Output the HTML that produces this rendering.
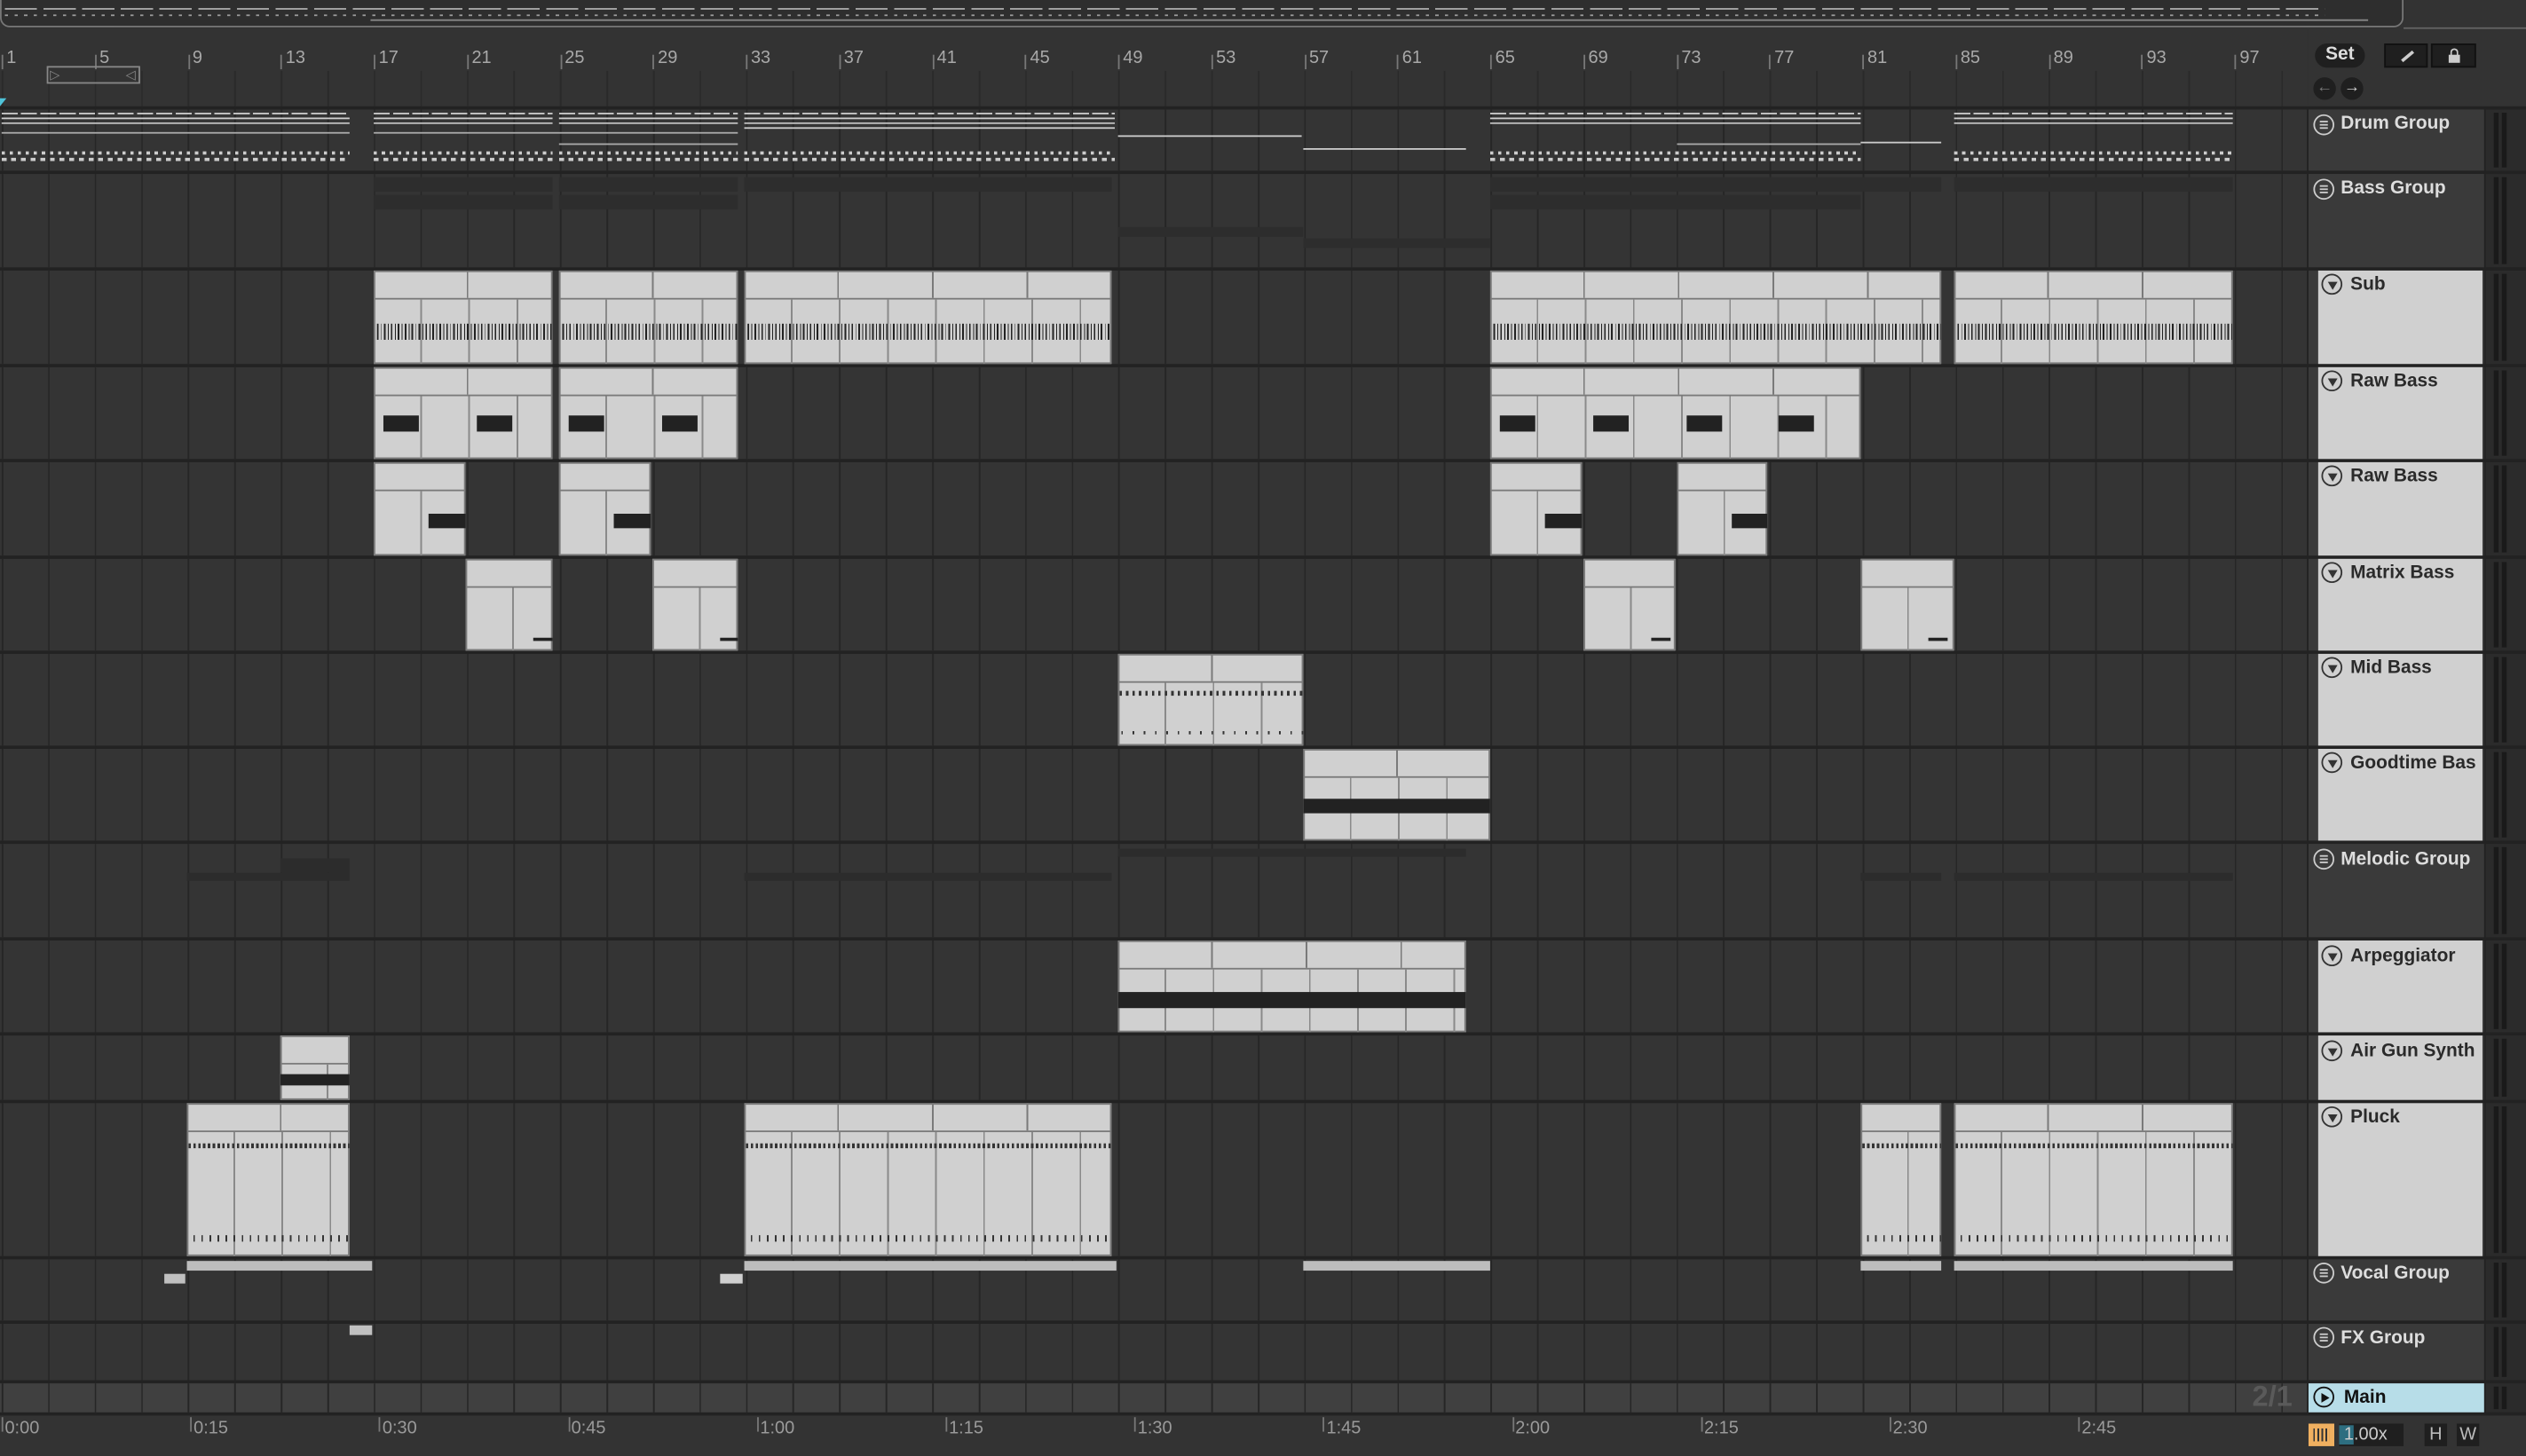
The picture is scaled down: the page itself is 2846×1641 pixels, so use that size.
<!DOCTYPE html>
<html><head><meta charset="utf-8">
<style>
html,body{margin:0;padding:0;background:#333;overflow:hidden;width:2846px;height:1640px}
#s{position:absolute;left:0;top:0;width:1568px;height:904px;transform:scale(1.81505);transform-origin:0 0;background:#333;font-family:"Liberation Sans",sans-serif;overflow:hidden}
.a{position:absolute}
.row{position:absolute;left:0;width:1432px;background-color:#343434;background-image:repeating-linear-gradient(90deg,#262626 0 1px,transparent 1px 28.88px);background-position:1px 0}
.clip{position:absolute;background:#d0d0d0;box-shadow:inset 0 0 0 1px #7a7a7a;overflow:hidden}
.hd{position:absolute;left:0;right:0;top:0;border-bottom:1px solid #7a7a7a;background-image:repeating-linear-gradient(90deg,transparent 0 57.76px,#7a7a7a 57.76px 58.76px)}
.bd{position:absolute;left:0;right:0;bottom:0;background-image:repeating-linear-gradient(90deg,transparent 0 28.88px,#8a8a8a 28.88px 29.88px)}
.rn{position:absolute;top:30px;font-size:11px;color:#a8a8a8;font-family:"Liberation Sans Narrow","Liberation Sans",sans-serif}
.rt{position:absolute;top:34px;width:1px;height:9px;background:#777}
.th{position:absolute;left:1433px;width:109px;background:#3a3a3a}
.ti{position:absolute;left:1439px;width:102px;background:#d0d0d0}
.lb{position:absolute;font-size:11.5px;font-weight:bold;white-space:nowrap}
.ic{position:absolute;width:13px;height:13px;border-radius:50%;box-sizing:border-box}
.g{border:1px solid #ccc}
.g::before{content:"";position:absolute;left:3px;top:3px;width:5px;height:5px;border-top:1px solid #ccc;border-bottom:1px solid #ccc;box-sizing:border-box}
.g::after{content:"";position:absolute;left:3px;top:5px;width:5px;height:1px;background:#ccc}
.t{border:1px solid #333}
.t::before{content:"";position:absolute;left:2.5px;top:4px;border-left:3.5px solid transparent;border-right:3.5px solid transparent;border-top:5px solid #333}
.mt{position:absolute;left:1543px;width:25px;background:#2b2b2b}
.mt i{position:absolute;top:2px;bottom:2px;width:3px;background:#1a1a1a}
.tl{position:absolute;top:881px;font-size:11px;color:#9a9a9a}
.tk{position:absolute;top:880px;width:1px;height:9px;background:#777}
</style></head><body><div id="s">
<div class="a" style="left:0;top:0;width:1492px;height:17px;background:#2e2e2e;border:1px solid #777;border-top:none;border-radius:0 0 6px 6px;box-sizing:border-box"></div>
<div class="a" style="left:1492px;top:0;width:76px;height:17px;background:#333;border-bottom:1px solid #666"></div>
<div class="a" style="left:3px;top:5px;width:1440px;height:1px;background:repeating-linear-gradient(90deg,#aaa 0 20px,transparent 20px 24px)"></div>
<div class="a" style="left:3px;top:9px;width:1440px;height:1px;background:repeating-linear-gradient(90deg,#999 0 2px,transparent 2px 6px)"></div>
<div class="a" style="left:230px;top:12px;width:1240px;height:1px;background:#888"></div>
<div class="a" style="left:0;top:18px;width:1432px;height:50px;background:#333"></div>
<div class="a" style="left:0;top:44px;width:1432px;height:24px;background-image:repeating-linear-gradient(90deg,#2a2a2a 0 1px,transparent 1px 28.88px);background-position:1px 0"></div>
<div id="ruler"></div>
<div class="a" style="left:29px;top:41px;width:58px;height:11px;border:1px solid #888;box-sizing:border-box"></div>
<div class="a" style="left:31px;top:43px;color:#888;font-size:8px;line-height:7px">▷</div>
<div class="a" style="left:78px;top:43px;color:#888;font-size:8px;line-height:7px">◁</div>
<div class="a" style="left:0;top:61px;width:0;height:0;border-left:4px solid #4fc3d9;border-bottom:5px solid transparent"></div>
<div class="a" style="left:1433px;top:18px;width:135px;height:50px;background:#333"></div>
<div class="a" style="left:1437px;top:27px;width:31px;height:15px;border-radius:8px;background:#1f1f1f;color:#ddd;font-size:11.5px;font-weight:bold;text-align:center;line-height:15px">Set</div>
<div class="a" style="left:1480px;top:27px;width:27px;height:15px;background:#1f1f1f;border:1px solid #111;box-sizing:border-box"><div class="a" style="left:9px;top:6px;width:9px;height:2px;background:#ccc;transform:rotate(-40deg)"></div></div>
<div class="a" style="left:1509px;top:27px;width:28px;height:15px;background:#1f1f1f;border:1px solid #111;box-sizing:border-box"><div class="a" style="left:10px;top:6px;width:7px;height:5px;background:#ccc"></div><div class="a" style="left:11px;top:2px;width:3px;height:4px;border:1px solid #ccc;border-bottom:none;border-radius:3px 3px 0 0"></div></div>
<div class="a" style="left:1436px;top:48px;width:14px;height:14px;border-radius:50%;background:#1f1f1f;color:#777;font-size:10px;text-align:center;line-height:14px">←</div>
<div class="a" style="left:1453px;top:48px;width:14px;height:14px;border-radius:50%;background:#1f1f1f;color:#ccc;font-size:10px;text-align:center;line-height:14px">→</div>
<div class="a" style="left:0;top:66px;width:1568px;height:814px;background:#222"></div>
<div id="rows"></div>
<div id="clips"></div>
<div class="th" style="top:68px;height:38px"></div><div class="ic g" style="left:1436px;top:71px"></div><div class="lb" style="left:1453px;top:71px;color:#ddd">Drum Group</div>
<div class="th" style="top:108px;height:58px"></div><div class="ic g" style="left:1436px;top:111px"></div><div class="lb" style="left:1453px;top:111px;color:#ddd">Bass Group</div>
<div class="th" style="top:168px;height:58px"></div><div class="ti" style="top:168px;height:58px"></div><div class="ic t" style="left:1441px;top:170px"></div><div class="lb" style="left:1459px;top:171px;color:#2a2a2a">Sub</div>
<div class="th" style="top:228px;height:57px"></div><div class="ti" style="top:228px;height:57px"></div><div class="ic t" style="left:1441px;top:230px"></div><div class="lb" style="left:1459px;top:231px;color:#2a2a2a">Raw Bass</div>
<div class="th" style="top:287px;height:58px"></div><div class="ti" style="top:287px;height:58px"></div><div class="ic t" style="left:1441px;top:289px"></div><div class="lb" style="left:1459px;top:290px;color:#2a2a2a">Raw Bass</div>
<div class="th" style="top:347px;height:57px"></div><div class="ti" style="top:347px;height:57px"></div><div class="ic t" style="left:1441px;top:349px"></div><div class="lb" style="left:1459px;top:350px;color:#2a2a2a">Matrix Bass</div>
<div class="th" style="top:406px;height:57px"></div><div class="ti" style="top:406px;height:57px"></div><div class="ic t" style="left:1441px;top:408px"></div><div class="lb" style="left:1459px;top:409px;color:#2a2a2a">Mid Bass</div>
<div class="th" style="top:465px;height:57px"></div><div class="ti" style="top:465px;height:57px"></div><div class="ic t" style="left:1441px;top:467px"></div><div class="lb" style="left:1459px;top:468px;color:#2a2a2a">Goodtime Bas</div>
<div class="th" style="top:524px;height:58px"></div><div class="ic g" style="left:1436px;top:527px"></div><div class="lb" style="left:1453px;top:528px;color:#ddd">Melodic Group</div>
<div class="th" style="top:584px;height:57px"></div><div class="ti" style="top:584px;height:57px"></div><div class="ic t" style="left:1441px;top:587px"></div><div class="lb" style="left:1459px;top:588px;color:#2a2a2a">Arpeggiator</div>
<div class="th" style="top:643px;height:40px"></div><div class="ti" style="top:643px;height:40px"></div><div class="ic t" style="left:1441px;top:646px"></div><div class="lb" style="left:1459px;top:647px;color:#2a2a2a">Air Gun Synth</div>
<div class="th" style="top:685px;height:95px"></div><div class="ti" style="top:685px;height:95px"></div><div class="ic t" style="left:1441px;top:687px"></div><div class="lb" style="left:1459px;top:688px;color:#2a2a2a">Pluck</div>
<div class="th" style="top:782px;height:38px"></div><div class="ic g" style="left:1436px;top:784px"></div><div class="lb" style="left:1453px;top:785px;color:#ddd">Vocal Group</div>
<div class="th" style="top:822px;height:35px"></div><div class="ic g" style="left:1436px;top:824px"></div><div class="lb" style="left:1453px;top:825px;color:#ddd">FX Group</div>
<div class="th" style="top:859px;height:18px;background:#b7dde8"></div><div class="ic" style="left:1436px;top:861px;border:1px solid #111"><div class="a" style="left:3.5px;top:2.5px;border-top:3.5px solid transparent;border-bottom:3.5px solid transparent;border-left:5px solid #111"></div></div><div class="lb" style="left:1455px;top:862px;color:#111">Main</div>
<div class="a" style="left:1398px;top:857px;font-size:18px;font-weight:bold;color:#5a5a5a">2/1</div>
<div id="meters"></div>
<div class="a" style="left:0;top:879px;width:1568px;height:25px;background:#333"></div>
<div id="tline"></div>
<div class="a" style="left:1433px;top:884px;width:16px;height:14px;background:#f0b060"><div class="a" style="left:3px;top:3px;width:10px;height:8px;background:repeating-linear-gradient(90deg,#333 0 1px,transparent 1px 2.5px)"></div></div>
<div class="a" style="left:1452px;top:884px;width:40px;height:14px;background:#1f1f1f;color:#ccc;font-size:11px;line-height:14px"><span style="background:#2d6e80;padding:0 0 0 3px">1</span>.00x</div>
<div class="a" style="left:1505px;top:884px;width:14px;height:14px;background:#1f1f1f;color:#bbb;font-size:11px;text-align:center;line-height:14px">H</div>
<div class="a" style="left:1525px;top:884px;width:14px;height:14px;background:#1f1f1f;color:#bbb;font-size:11px;text-align:center;line-height:14px">W</div>
<script>
function bx(b){return 1+(b-1)*14.44}
var h='';
var nums=[1,5,9,13,17,21,25,29,33,37,41,45,49,53,57,61,65,69,73,77,81,85,89,93,97];
nums.forEach(function(n){var x=bx(n);h+='<div class="rt" style="left:'+x+'px"></div><div class="rn" style="left:'+(x+3)+'px">'+n+'</div>';});
document.getElementById('ruler').innerHTML=h;
var rows=[[68,106],[108,166],[168,226],[228,285],[287,345],[347,404],[406,463],[465,522],[524,582],[584,641],[643,683],[685,780],[782,820],[822,857],[859,877]];
h='';var m='';
rows.forEach(function(r,i){h+='<div class="row" style="top:'+r[0]+'px;height:'+(r[1]-r[0])+'px'+(i==14?';background-color:#404040':'')+'"></div>';
m+='<div class="mt" style="top:'+r[0]+'px;height:'+(r[1]-r[0])+'px"><i style="left:5px"></i><i style="left:10px"></i></div>';});
document.getElementById('rows').innerHTML=h;document.getElementById('meters').innerHTML=m;
var tl=['0:00','0:15','0:30','0:45','1:00','1:15','1:30','1:45','2:00','2:15','2:30','2:45'];h='';
tl.forEach(function(t,i){var x=1+i*117.2;h+='<div class="tk" style="left:'+x+'px"></div><div class="tl" style="left:'+(x+2)+'px">'+t+'</div>';});
document.getElementById('tline').innerHTML=h;
h='';
function clip(x1,x2,y1,y2,hh,inner){h+='<div class="clip" style="left:'+x1+'px;top:'+y1+'px;width:'+(x2-x1)+'px;height:'+(y2-y1)+'px"><div class="hd" style="height:'+hh+'px"></div><div class="bd" style="top:'+(hh+1)+'px"></div>'+(inner||'')+'</div>';}
function bar(y,hgt,x,w,c){return '<div class="a" style="left:'+x+'px;top:'+y+'px;width:'+w+'px;height:'+hgt+'px;background:'+c+'"></div>';}
var tick='<div class="a" style="left:2px;right:0;top:33px;height:10px;background:repeating-linear-gradient(90deg,#222 0 1px,transparent 1px 2.5px,#222 2.5px 3px,transparent 3px 4.3px)"></div>';
[[232,343],[347,458],[462,690],[925,1205],[1213,1386]].forEach(function(c){clip(c[0],c[1],168,226,17,tick)});
function rb(x1,x2){var s='';for(var x=x1;x<x2-20;x+=57.76){s+=bar(30,10,x-x1+6,22,'#222');}return s;}
[[232,343],[347,458],[925,1155]].forEach(function(c){clip(c[0],c[1],228,285,17,rb(c[0],c[1]))});
[[232,289],[347,404],[925,982],[1041,1097]].forEach(function(c){clip(c[0],c[1],287,345,17,bar(32,9,34,23,'#222'))});
[[289,343],[405,458],[983,1040],[1155,1213]].forEach(function(c){clip(c[0],c[1],347,404,17,bar(49,2,42,12,'#222'))});
var dots='<div class="a" style="left:1px;right:0;top:23px;height:3px;background:repeating-linear-gradient(90deg,#333 0 1.5px,transparent 1.5px 4px)"></div><div class="a" style="left:2px;right:0;top:48px;height:2px;background:repeating-linear-gradient(90deg,#333 0 1px,transparent 1px 7px)"></div>';
clip(694,809,406,463,17,dots);
clip(809,925,465,522,17,bar(31,9,0,120,'#222'));
clip(694,910,584,641,17,bar(32,10,0,220,'#222'));
clip(174,217,643,683,17,bar(24,7,0,50,'#222'));
var pl='<div class="a" style="left:1px;right:0;top:25px;height:3px;background:repeating-linear-gradient(90deg,#333 0 1.5px,transparent 1.5px 3px)"></div><div class="a" style="left:4px;right:0;top:82px;height:4px;background:repeating-linear-gradient(90deg,#333 0 1px,transparent 1px 5px)"></div>';
[[116,217],[462,690],[1155,1205],[1213,1386]].forEach(function(c){clip(c[0],c[1],685,780,17,pl)});
[[116,231],[462,693],[809,925],[1155,1205],[1213,1386]].forEach(function(c){h+=bar(783,6,c[0],c[1]-c[0],'#bdbdbd')});
h+=bar(791,6,102,13,'#c0c0c0')+bar(791,6,447,14,'#d0d0d0')+bar(823,6,217,14,'#c0c0c0');
[[116,217],[462,690],[1155,1205],[1213,1386]].forEach(function(c){h+=bar(542,5,c[0],c[1]-c[0],'#2c2c2c')});
h+=bar(533,9,174,43,'#2c2c2c')+bar(527,5,694,216,'#2c2c2c');
[[232,343],[347,458],[462,690],[925,1205],[1213,1386]].forEach(function(c){h+=bar(110,9,c[0],c[1]-c[0],'#2d2d2d')});
[[232,343],[347,458],[925,1155]].forEach(function(c){h+=bar(121,9,c[0],c[1]-c[0],'#2d2d2d')});
h+=bar(141,6,694,115,'#2d2d2d')+bar(148,6,809,116,'#2d2d2d');
[[1,217],[232,343],[347,458],[462,692],[925,1155],[1213,1386]].forEach(function(c){var w=c[1]-c[0];
h+='<div class="a" style="left:'+c[0]+'px;top:70px;width:'+w+'px;height:1px;background:repeating-linear-gradient(90deg,#ccc 0 10px,transparent 10px 12px)"></div>';
h+=bar(73,1,c[0],w,'#cfcfcf')+bar(76,1,c[0],w,'#bdbdbd');
h+='<div class="a" style="left:'+c[0]+'px;top:94px;width:'+w+'px;height:2px;background:repeating-linear-gradient(90deg,#ccc 0 2px,transparent 2px 5px)"></div>';
h+='<div class="a" style="left:'+c[0]+'px;top:98px;width:'+w+'px;height:2px;background:repeating-linear-gradient(90deg,#ccc 0 3px,transparent 3px 6px)"></div>';});
h+=bar(82,1,1,216,'#aaa')+bar(82,1,232,226,'#aaa')+bar(89,1,347,111,'#aaa')+bar(84,1,694,114,'#ccc')+bar(92,1,809,101,'#ccc')+bar(88,1,1155,50,'#ccc')+bar(79,1,462,230,'#ccc')+bar(89,1,1041,114,'#aaa');
document.getElementById('clips').innerHTML=h;
</script>
</div></body></html>
